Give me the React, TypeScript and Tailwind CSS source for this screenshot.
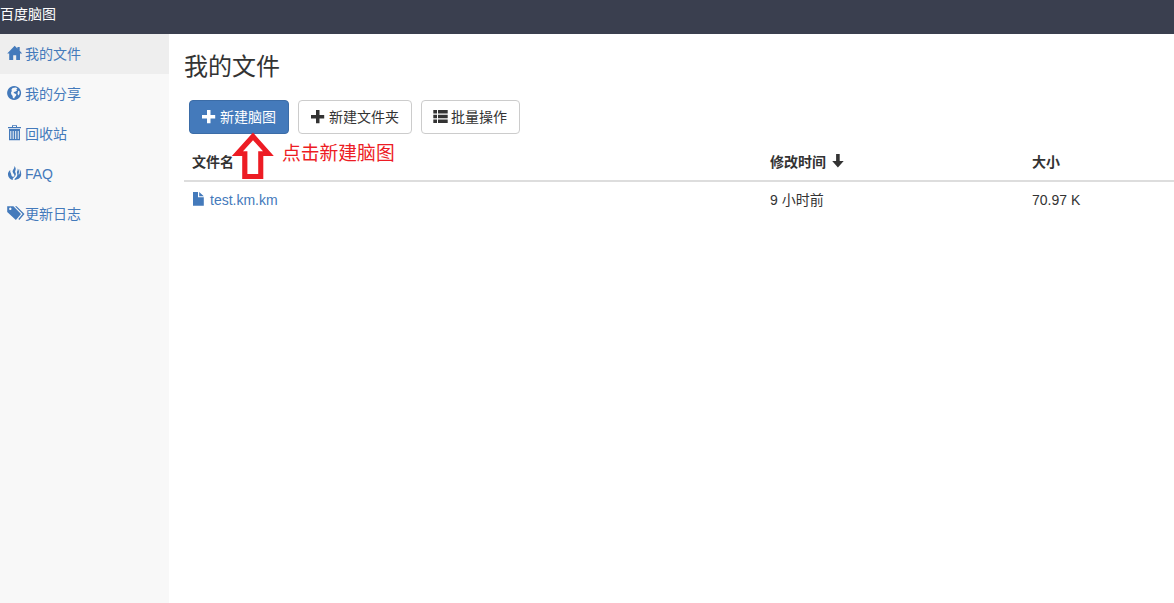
import React from "react";

type IconProps = { className?: string };

const HomeIcon = () => (
  <svg width="18" height="18" viewBox="0 0 18 18" fill="currentColor">
    <path d="M7.7 0.8 L10.4 3.5 V2 H12.7 V5.8 L15.2 8.5 H13 V15 H9.2 V10.2 H6.2 V15 H2.2 V8.5 H0.2 Z" />
  </svg>
);

const GlobeIcon = () => (
  <svg width="18" height="18" viewBox="0 0 18 18" fill="currentColor">
    <path
      fillRule="evenodd"
      d="M7.1 1 a7 7 0 1 0 0.01 0 Z M5.6 2.9 L8.6 2.4 L10.4 3.2 L9.3 4.4 L10.2 5.2 L8.6 6.6 L7 6.9 L6.6 8 L8 8.6 L9.4 9.4 L9 10.8 L7.6 12.2 L7.3 13.4 L5.9 12.9 L5.6 10.9 L4.3 9.3 L4 7.6 L5 5.8 L4.2 5 Z M11.2 5.8 L12.6 6.6 L12.5 9 L11.2 10.4 L10.5 8.4 Z"
    />
  </svg>
);

const TrashIcon = () => (
  <svg width="18" height="18" viewBox="0 0 18 18" fill="currentColor">
    <path
      fillRule="evenodd"
      d="M5 0.2 H10 V2 H14 V3.2 H1 V2 H5 Z M6 1.1 V2 H9 V1.1 Z M2 4 H13 V15.2 H2 Z M3.3 6 V14 H4.3 V6 Z M5.7 6 V14 H6.7 V6 Z M8.2 6 V14 H9.2 V6 Z M10.7 6 V14 H11.7 V6 Z"
    />
  </svg>
);

const FireIcon = () => (
  <svg width="18" height="18" viewBox="0 0 18 18" fill="currentColor">
    <path d="M7.2 0.9 C8 3.3 5.4 4.8 5.6 6.7 C5.8 8.3 7.8 9 7.4 10.7 C7.1 12 5.1 12.1 4.6 10.8 C4.2 9.7 4.3 8.9 3.6 7.7 C3.1 6.7 3.1 5.8 3.3 4.9 C1.6 6.2 0.7 8 1 9.9 C1.3 12.4 3.2 14.4 6.1 15 C5.2 13.8 6 13.1 7 12.2 C9 10.6 9.3 9.2 8.4 7.6 C7.7 6.4 8.6 5.6 8.7 4.3 C8.8 2.9 8.3 1.7 7.2 0.9 Z" />
    <path d="M10.6 3.5 C11.3 5.5 9.4 6.5 10 8 C10.5 9.5 10.5 10.8 9.5 12 C8.6 13.1 7.6 13.6 7.5 14.9 C11.2 14.7 14.1 12.7 14.2 9.3 C14.2 7.5 13.7 5.4 12.6 4 C12.9 6.2 13.2 8.7 11.9 9.7 C11.1 9 12.1 8.2 12 6.6 C11.9 5.3 11.5 4.3 10.6 3.5 Z" />
  </svg>
);

const TagsIcon = () => (
  <svg width="18" height="18" viewBox="0 0 18 18" fill="currentColor">
    <path
      fillRule="evenodd"
      d="M0.2 1.2 H6.4 L14 8.9 L8.9 15 L0.2 6.9 Z M3.3 2.6 a1.2 1.2 0 1 0 0.01 0 Z"
    />
    <path d="M8 1.2 H9.6 L17.5 9 L12.3 15 L11.3 14 L15.6 9 Z" />
  </svg>
);

const PlusIcon = () => (
  <svg width="14" height="14" viewBox="0 0 14 14" fill="currentColor" className="shrink-0">
    <path d="M5 0 H8.5 V5 H13.2 V8.5 H8.5 V13.3 H5 V8.5 H0 V5 H5 Z" />
  </svg>
);

const ListIcon = () => (
  <svg width="15" height="14" viewBox="0 0 15 14" fill="currentColor" className="shrink-0">
    <path d="M0.3 0 H4 V3.6 H0.3 Z M5 0 H14.7 V3.6 H5 Z M0.3 4.8 H4 V8.3 H0.3 Z M5 4.8 H14.7 V8.3 H5 Z M0.3 9.5 H4 V13 H0.3 Z M5 9.5 H14.7 V13 H5 Z" />
  </svg>
);

const SortIcon = () => (
  <svg width="12" height="14" viewBox="0 0 12 14" fill="currentColor" className="mb-0.5">
    <path d="M4.1 0 H7.7 V7 H11.7 L5.9 13.5 L0.2 7 H4.1 Z" />
  </svg>
);

const FileIcon = () => (
  <svg width="12" height="14" viewBox="0 0 12 14" fill="currentColor" className="mb-0.5">
    <path d="M1 0 H6 V5.2 H11.8 V13.8 H1 Z M7.2 0 L11.8 4.3 H7.2 Z" />
  </svg>
);

const Arrow = ({ className }: IconProps) => (
  <svg width="43" height="47" viewBox="0 0 43 47" className={className}>
    <path d="M22 0.6 L42.8 24 H32.3 V47 H11.2 V24 H0.8 Z" fill="#ed1c24" />
    <path d="M22 8.2 L32 19.2 H27.2 V42 H16.4 V19.2 H12 Z" fill="#fff" />
  </svg>
);

const navItems = [
  { label: "我的文件", icon: <HomeIcon />, active: true },
  { label: "我的分享", icon: <GlobeIcon /> },
  { label: "回收站", icon: <TrashIcon /> },
  { label: "FAQ", icon: <FireIcon /> },
  { label: "更新日志", icon: <TagsIcon /> },
];

const App = () => {
  return (
    <div className="relative flex h-screen flex-col overflow-hidden bg-white font-['Liberation_Sans','Noto_Sans_CJK_SC',sans-serif] text-sm text-[#333]">
      <header className="h-[34px] shrink-0 bg-[#3a3f4f] pt-1 text-white">
        百度脑图
      </header>
      <div className="flex min-h-0 flex-1">
        <nav className="w-[169px] shrink-0 bg-[#f8f8f8]">
          {navItems.map((item) => (
            <a
              key={item.label}
              href="#"
              className={`flex h-10 items-center pl-[7px] text-[#447abb] ${
                item.active ? "bg-[#eee]" : ""
              }`}
            >
              {item.icon}
              <span>{item.label}</span>
            </a>
          ))}
        </nav>
        <main className="min-w-0 flex-1 pl-[15px]">
          <h1 className="mt-5 h-[26px] text-2xl leading-[26px]">我的文件</h1>
          <div className="mt-5 ml-[5px] flex h-[34px]">
            <button className="flex w-[100px] items-center gap-1 rounded border border-[#3b6ca7] bg-[#447abb] pl-3 text-white">
              <PlusIcon />
              新建脑图
            </button>
            <button className="ml-[9px] flex w-[114px] items-center gap-1 rounded border border-[#ccc] pl-3">
              <PlusIcon />
              新建文件夹
            </button>
            <button className="ml-[9px] flex w-[99px] items-center gap-[3px] rounded border border-[#ccc] pl-[11px]">
              <ListIcon />
              批量操作
            </button>
          </div>
          <div className="mt-[10px] grid h-[38px] grid-cols-[578px_262px_1fr] items-center border-b-2 border-[#ddd] font-bold">
            <div className="pl-2">文件名</div>
            <div className="flex items-center gap-1.5 pl-2">
              修改时间
              <SortIcon />
            </div>
            <div className="pl-2">大小</div>
          </div>
          <div className="grid h-9 grid-cols-[578px_262px_1fr] items-center">
            <div className="flex items-center gap-1.5 pl-2 text-[#447abb]">
              <FileIcon />
              <a href="#">test.km.km</a>
            </div>
            <div className="pl-2">9 小时前</div>
            <div className="pl-2">70.97 K</div>
          </div>
        </main>
      </div>
      <Arrow className="absolute top-[132px] left-[231px]" />
      <span className="absolute top-[140px] left-[282px] text-[18.8px] leading-7 text-[#ed1c24]">
        点击新建脑图
      </span>
    </div>
  );
};

export default App;
